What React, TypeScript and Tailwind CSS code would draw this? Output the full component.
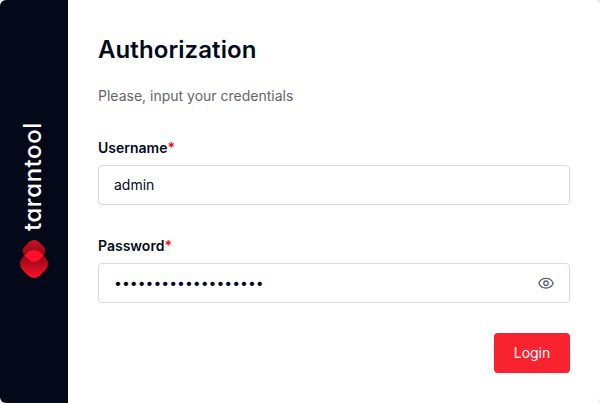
import type { ReactNode } from 'react';

function Logo() {
  return (
    <svg className="block" width="30" height="40" viewBox="0 0 30 40" fill="none">
      <defs>
        <linearGradient id="top" x1="15" y1="1" x2="15" y2="24" gradientUnits="userSpaceOnUse">
          <stop stopColor="#d00f22" />
          <stop offset="0.6" stopColor="#91081a" />
        </linearGradient>
        <linearGradient id="bottom" x1="15" y1="11" x2="15" y2="39" gradientUnits="userSpaceOnUse">
          <stop offset="0.35" stopColor="#a00a1b" />
          <stop offset="0.9" stopColor="#f01024" />
        </linearGradient>
        <clipPath id="overlap">
          <path d="M10 3Q15 -1 20 3L24.5 7.5Q28.500 12 24.500 16.500L20 21Q15 25 10 21L5.500 16.500Q1.500 12 5.500 7.500Z" />
        </clipPath>
      </defs>
      <path d="M10 3Q15 -1 20 3L24.5 7.5Q28.500 12 24.500 16.500L20 21Q15 25 10 21L5.500 16.500Q1.500 12 5.500 7.500Z" fill="url(#top)" />
      <path d="M9 13Q15 9 21 13L26.500 18.500Q31.500 24.500 26.500 31L21 36.500Q15 41.500 9 36.500L3.500 31Q-1.500 24.500 3.500 18.500Z" fill="url(#bottom)" />
      <path clipPath="url(#overlap)" d="M9 13Q15 9 21 13L26.500 18.500Q31.500 24.500 26.500 31L21 36.500Q15 41.500 9 36.500L3.500 31Q-1.500 24.500 3.500 18.500Z" fill="#ff1028" />
    </svg>
  );
}

function Field({ label, htmlFor, children }: { label: string; htmlFor: string; children: ReactNode }) {
  return (
    <div className="flex flex-col gap-[6px]">
      <label htmlFor={htmlFor} className="text-sm leading-[22px] font-semibold">
        {label}
        <span className="text-[#ff0000]">*</span>
      </label>
      <div className="flex h-10 items-center rounded border border-[#d9d9d9] bg-white px-[15px]">{children}</div>
    </div>
  );
}

export default function App() {
  return (
    <div className="h-[403px] w-[600px] bg-[#efefef] font-['Inter',sans-serif] text-[#020a1c]">
      <div className="flex h-full overflow-hidden rounded-md bg-white">
        <aside className="flex w-[68px] shrink-0 flex-col items-center bg-[#030919] pt-[123px]">
          <div className="mr-[2px] flex h-[108px] w-7 rotate-180 items-center justify-start text-2xl leading-7 font-medium tracking-[0.55px] whitespace-nowrap text-white [font-feature-settings:'cv11'] [writing-mode:vertical-rl]">
            tarantool
          </div>
          <div className="mt-[8px]">
            <Logo />
          </div>
        </aside>
        <main className="flex grow flex-col px-[30px] pt-[34px]">
          <h1 className="text-2xl leading-8 font-semibold tracking-[0.08px]">Authorization</h1>
          <p className="mt-[19px] text-sm leading-[22px] text-[#666666]">Please, input your credentials</p>
          <form className="mt-[30px] flex flex-col gap-[30px]">
            <Field label="Username" htmlFor="username">
              <input id="username" className="w-full text-sm outline-none" defaultValue="admin" />
            </Field>
            <Field label="Password" htmlFor="password">
              <input id="password" type="password" className="min-w-0 grow text-sm outline-none" defaultValue="correct-horse-19-ch" />
              <svg width="16" height="16" viewBox="0 0 16 16" fill="none" stroke="#5c616e" strokeWidth="1.3">
                <path d="M0.8 8.200C2.200 4.900 4.800 3.400 8 3.400S13.800 4.900 15.200 8.200C13.800 11.500 11.200 13 8 13S2.200 11.500 0.800 8.200Z" />
                <circle cx="8" cy="8.200" r="2.200" />
              </svg>
            </Field>
            <button type="button" className="h-10 w-[76px] self-end rounded bg-[#f9222f] text-sm text-white">
              Login
            </button>
          </form>
        </main>
      </div>
    </div>
  );
}
